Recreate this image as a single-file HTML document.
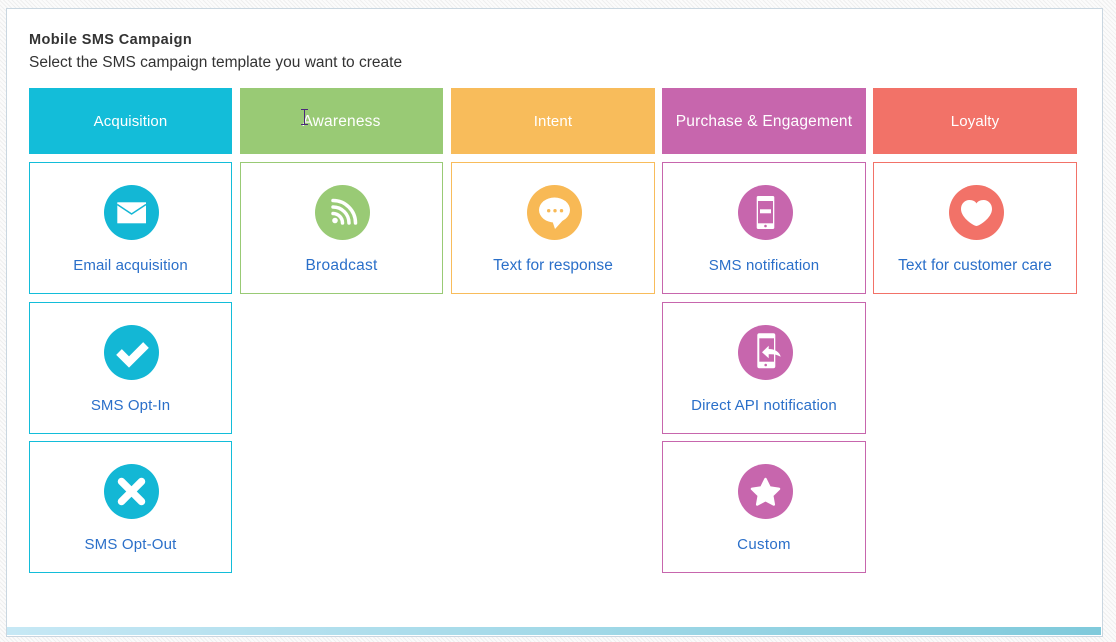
<!DOCTYPE html>
<html><head><meta charset="utf-8"><style>
html,body{margin:0;padding:0}
body{width:1116px;height:642px;position:relative;overflow:hidden;font-family:"Liberation Sans",Arial,sans-serif;background-color:#f7f7f7;background-image:repeating-linear-gradient(45deg,#efefef 0 1px,#fbfbfb 1px 3px)}
#panel{position:absolute;left:6px;top:8px;width:1095px;height:627px;border:1px solid #c9d6e0;background:#fff}
#bar{position:absolute;left:7px;top:627px;width:1094px;height:8px;background:linear-gradient(90deg,#c6e8f5,#7fcadb)}
.t{position:absolute;white-space:nowrap;color:#333}
.h{position:absolute;top:88px;height:66px;line-height:68px;text-align:center;color:#fff;font-size:15px}
.c{position:absolute;box-sizing:border-box;height:132px;border:1px solid;background:#fff}
.l{position:absolute;left:0;right:0;top:93.500px;text-align:center;color:#2a6fc9;font-size:15px;line-height:18px;white-space:nowrap}
.c svg{position:absolute;top:22px;width:55px;height:55px}
</style></head><body>
<div id="panel"></div><div id="bar"></div>
<div class="t" style="left:29px;top:31px;font-size:14.5px;line-height:18px;font-weight:bold;letter-spacing:.4px">Mobile SMS Campaign</div>
<div class="t" style="left:29px;top:54px;font-size:15.5px;line-height:18px">Select the SMS campaign template you want to create</div>

<div class="h" style="left:29px;width:203px;background:#13bdd9;letter-spacing:.1px">Acquisition</div>
<div class="h" style="left:240px;width:203px;background:#99ca75;font-size:15.5px;letter-spacing:.2px">Awareness</div>
<div class="h" style="left:451px;width:204px;background:#f8bc5b;letter-spacing:.17px">Intent</div>
<div class="h" style="left:662px;width:204px;background:#c766ad;font-size:15.5px;letter-spacing:.2px">Purchase &amp; Engagement</div>
<div class="h" style="left:873px;width:204px;background:#f27268;letter-spacing:.15px">Loyalty</div>

<svg style="position:absolute;left:301px;top:109px" width="7" height="16" viewBox="0 0 7 16"><path d="M0 .5H7M3.500 .5V15.500M0 15.500H7" stroke="#4b2a7a" stroke-width="1" fill="none"/></svg>

<div class="c" style="left:29px;top:162px;width:203px;border-color:#13bdd9"><svg style="left:74px" viewBox="0 0 55 55"><circle cx="27.500" cy="27.500" r="27.500" fill="#13b7d5"/><rect x="13.300" y="17.300" width="28.700" height="21" fill="#fff"/><path d="M13.300 19.500L27.600 29L42 19.500" fill="none" stroke="#13b7d5" stroke-width="1.500"/></svg><div class="l" style="letter-spacing:.12px">Email acquisition</div></div>
<div class="c" style="left:29px;top:302px;width:203px;border-color:#13bdd9"><svg style="left:74px" viewBox="0 0 55 55"><circle cx="27.500" cy="27.500" r="27.500" fill="#13b7d5"/><path d="M15 27L25 37L42 20" fill="none" stroke="#fff" stroke-width="8"/></svg><div class="l" style="letter-spacing:.1px">SMS Opt-In</div></div>
<div class="c" style="left:29px;top:441px;width:203px;border-color:#13bdd9"><svg style="left:74px" viewBox="0 0 55 55"><circle cx="27.500" cy="27.500" r="27.500" fill="#13b7d5"/><path d="M17.500 17.500L37.500 37.500M37.500 17.500L17.500 37.500" fill="none" stroke="#fff" stroke-width="7.500" stroke-linecap="round"/></svg><div class="l" style="letter-spacing:.18px">SMS Opt-Out</div></div>

<div class="c" style="left:240px;top:162px;width:203px;border-color:#99ca75"><svg style="left:74px" viewBox="0 0 55 55"><circle cx="27.500" cy="27.500" r="27.500" fill="#99ca75"/><circle cx="20" cy="35.500" r="2.800" fill="#fff"/><path d="M18 28.500A9.500 9.500 0 0 1 27.500 38M18 22A16 16 0 0 1 34 38M18 15.500A22.500 22.500 0 0 1 40.500 38" fill="none" stroke="#fff" stroke-width="3.500" stroke-linecap="round"/></svg><div class="l" style="font-size:15.5px;letter-spacing:.25px">Broadcast</div></div>

<div class="c" style="left:451px;top:162px;width:204px;border-color:#f8bc5b"><svg style="left:75px" viewBox="0 0 55 55"><circle cx="27.500" cy="27.500" r="27.500" fill="#f8b955"/><ellipse cx="27.500" cy="25" rx="15.500" ry="12.500" fill="#fff"/><path d="M25 35L28 44L38 33Z" fill="#fff"/><circle cx="21.700" cy="25.700" r="1.700" fill="#f8b955"/><circle cx="28" cy="25.700" r="1.700" fill="#f8b955"/><circle cx="34.500" cy="25.700" r="1.700" fill="#f8b955"/></svg><div class="l" style="font-size:15.5px;letter-spacing:.05px">Text for response</div></div>

<div class="c" style="left:662px;top:162px;width:204px;border-color:#c766ad"><svg style="left:75px" viewBox="0 0 55 55"><circle cx="27.500" cy="27.500" r="27.500" fill="#c766ad"/><rect x="18.700" y="11" width="17.600" height="33" rx="1.500" fill="#fff"/><rect x="20" y="16" width="15" height="22.300" fill="#c766ad"/><rect x="22" y="24.300" width="11" height="4" fill="#fff"/><circle cx="27.500" cy="41" r="1.300" fill="#c766ad"/></svg><div class="l" style="letter-spacing:.13px">SMS notification</div></div>
<div class="c" style="left:662px;top:302px;width:204px;border-color:#c766ad"><svg style="left:75px" viewBox="0 0 55 55"><circle cx="27.500" cy="27.500" r="27.500" fill="#c766ad"/><rect x="19.300" y="8.300" width="18" height="35" rx="2" fill="#fff"/><rect x="21.300" y="13.300" width="14.700" height="23.400" fill="#c766ad"/><circle cx="27.700" cy="40" r="1.300" fill="#c766ad"/><path d="M24 27.300L30.700 20.700V24C37 24 41.500 27 42.700 31.700C39 29.500 35 29 30.700 29.300V33.300Z" fill="#fff"/></svg><div class="l" style="letter-spacing:.14px">Direct API notification</div></div>
<div class="c" style="left:662px;top:441px;width:204px;border-color:#c766ad"><svg style="left:75px" viewBox="0 0 55 55"><circle cx="27.500" cy="27.500" r="27.500" fill="#c766ad"/><path d="M27.500 15L31.700 23.500L41 24.900L34.200 31.500L35.800 40.500L27.500 36.200L19.200 40.500L20.800 31.500L14 24.900L23.300 23.500Z" fill="#fff" stroke="#fff" stroke-width="2.500" stroke-linejoin="round"/></svg><div class="l" style="letter-spacing:.33px">Custom</div></div>

<div class="c" style="left:873px;top:162px;width:204px;border-color:#f27268"><svg style="left:75px" viewBox="0 0 55 55"><circle cx="27.500" cy="27.500" r="27.500" fill="#f27268"/><path d="M27.500 41C25 41 12 33 12 24C12 18.500 16 15 20.500 15C24 15 26.500 16.500 27.500 18.500C28.500 16.500 31 15 34.500 15C39 15 43 18.500 43 24C43 33 30 41 27.500 41Z" fill="#fff"/></svg><div class="l" style="font-size:15.5px;letter-spacing:.02px">Text for customer care</div></div>
</body></html>
